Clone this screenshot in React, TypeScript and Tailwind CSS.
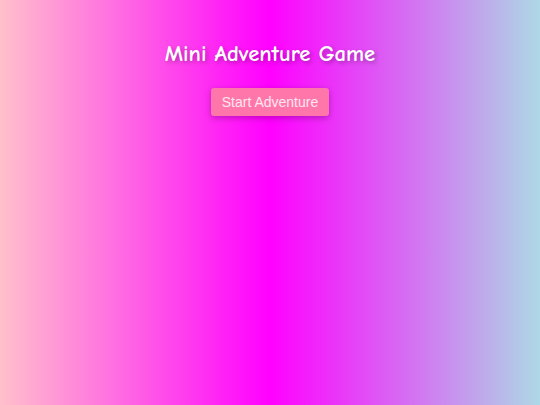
import { useState } from 'react'

const App = () => {
  const [started, setStarted] = useState(false)

  return (
    <div className="min-h-[405px] w-full bg-[linear-gradient(to_right,#ffc0cb,#ff00ff,#add8e6)] flex flex-col items-center pt-[39px]">
      <h1 className="text-[22.7px] leading-[30px] font-bold text-white font-['Comic_Sans_MS','Comic_Neue','DejaVu_Sans',sans-serif] [text-shadow:2px_2px_4px_rgba(0,0,0,0.3)]">
        Mini Adventure Game
      </h1>
      <button
        onClick={() => setStarted(true)}
        className="mt-[19px] h-[28px] px-[11px] rounded-[3px] bg-[#ff77aa] text-[#ffe6ee] text-[14px] font-['Liberation_Sans',Arial,sans-serif] shadow-[0_2px_6px_rgba(0,0,0,0.25)]"
      >
        {started ? 'Adventure Started' : 'Start Adventure'}
      </button>
    </div>
  )
}

export default App
